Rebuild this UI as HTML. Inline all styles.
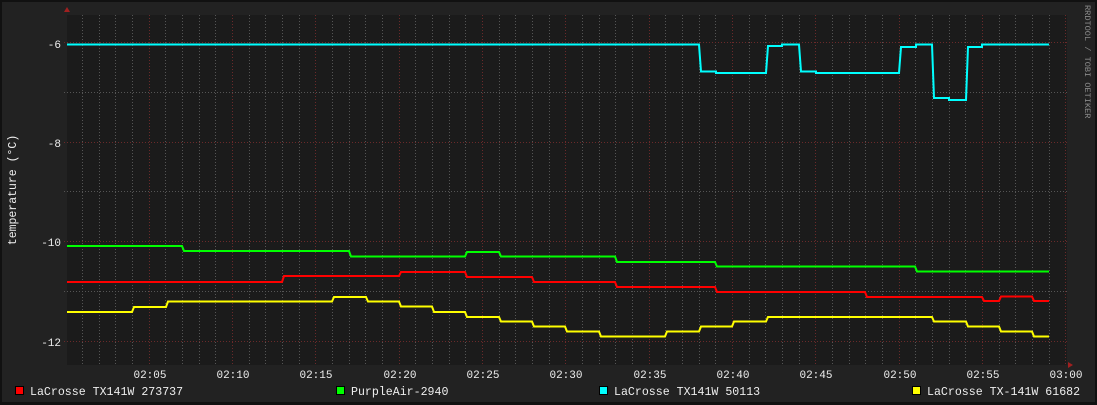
<!DOCTYPE html>
<html><head><meta charset="utf-8"><style>
html,body{margin:0;padding:0;background:#111;}
svg{display:block;}
text{font-family:"Liberation Mono","DejaVu Sans Mono",monospace;}
</style></head><body>
<svg width="1097" height="405" viewBox="0 0 1097 405" xmlns="http://www.w3.org/2000/svg">
<rect x="0" y="0" width="1097" height="405" fill="#111"/>
<rect x="2" y="2" width="1093" height="400" fill="#222"/>
<rect x="67" y="15" width="1000" height="350" fill="#1b1b1b"/>
<g stroke="#555" stroke-width="1" stroke-dasharray="1,2" shape-rendering="crispEdges">
<path d="M82.5 15V365M99.5 15V365M115.5 15V365M132.5 15V365M165.5 15V365M182.5 15V365M199.5 15V365M215.5 15V365M249.5 15V365M265.5 15V365M282.5 15V365M299.5 15V365M332.5 15V365M349.5 15V365M365.5 15V365M382.5 15V365M415.5 15V365M432.5 15V365M449.5 15V365M465.5 15V365M499.5 15V365M515.5 15V365M532.5 15V365M549.5 15V365M582.5 15V365M599.5 15V365M615.5 15V365M632.5 15V365M665.5 15V365M682.5 15V365M699.5 15V365M715.5 15V365M749.5 15V365M765.5 15V365M782.5 15V365M799.5 15V365M832.5 15V365M849.5 15V365M865.5 15V365M882.5 15V365M915.5 15V365M932.5 15V365M949.5 15V365M965.5 15V365M999.5 15V365M1015.5 15V365M1032.5 15V365M1049.5 15V365"/>
<path d="M64 92.5H1067M64 191.5H1067M64 291.5H1067"/>
</g>
<g stroke="#6a2a2a" stroke-width="1" stroke-dasharray="1,2" shape-rendering="crispEdges">
<path d="M149.5 15V365M232.5 15V365M315.5 15V365M399.5 15V365M482.5 15V365M565.5 15V365M649.5 15V365M732.5 15V365M815.5 15V365M899.5 15V365M982.5 15V365M1065.5 15V365"/>
<path d="M64 42.5H1067M64 142.5H1067M64 241.5H1067M64 341.5H1067"/>
</g>
<polygon points="64,12 70,12 67,7" fill="#a02020"/>
<polygon points="1068,362 1068,368 1073,365" fill="#a02020"/>
<g fill="none" stroke-width="2">
<path stroke="#ff0000" d="M67 282H282L284 276H399L401 272H465L467 277H532L534 282H615L617 287H715L717 292H865L867 297H982L984 301H999L1001 296.5H1032L1034 301H1049"/>
<path stroke="#00ff00" d="M67 246H182L184 251H349L351 256.5H465L467 252H499L501 256.5H615L617 262H715L717 266.5H915L917 271.5H1049"/>
<path stroke="#ffff00" d="M67 312H132L134 307H166L168 301.5H332L334 297H366L368 301.5H399L401 306.5H432L434 312H465L467 317H499L501 321.5H532L534 326.5H565L567 331.5H599L601 336.5H665L667 331.5H699L701 326.5H732L734 321.5H766L768 317H932L934 321.5H966L968 326.5H999L1001 331.5H1032L1034 336.5H1049"/>
<path stroke="#00ffff" d="M67 44.5H699L701 71.5H716V73H766L768 46H782V44.5H799L801 71.5H816V73H899L901 47H916V44.5H932L934 98H949V100H966L968 47H982V44.5H1049"/>
</g>
<g fill="#eee" font-size="11" text-anchor="end">
<text x="61" y="48">-6</text>
<text x="61" y="147">-8</text>
<text x="61" y="246">-10</text>
<text x="61" y="346">-12</text>
</g>
<g fill="#eee" font-size="11" text-anchor="middle">
<text x="150" y="378">02:05</text><text x="233" y="378">02:10</text><text x="316" y="378">02:15</text><text x="400" y="378">02:20</text><text x="483" y="378">02:25</text><text x="566" y="378">02:30</text><text x="650" y="378">02:35</text><text x="733" y="378">02:40</text><text x="816" y="378">02:45</text><text x="900" y="378">02:50</text><text x="983" y="378">02:55</text><text x="1066" y="378">03:00</text>
</g>
<text transform="translate(16,190) rotate(-90)" fill="#eee" font-size="11.5" text-anchor="middle">temperature (°C)</text>
<text transform="translate(1085,5) rotate(90)" fill="#888" font-size="8.6">RRDTOOL / TOBI OETIKER</text>
<g font-size="11.6" fill="#eee">
<rect x="15.5" y="386.5" width="8" height="8" fill="#ff0000" stroke="#000"/><text x="30" y="395">LaCrosse TX141W 273737</text>
<rect x="336.5" y="386.5" width="8" height="8" fill="#00ff00" stroke="#000"/><text x="351" y="395">PurpleAir-2940</text>
<rect x="599.5" y="386.5" width="8" height="8" fill="#00ffff" stroke="#000"/><text x="614" y="395">LaCrosse TX141W 50113</text>
<rect x="912.5" y="386.5" width="8" height="8" fill="#ffff00" stroke="#000"/><text x="927" y="395">LaCrosse TX-141W 61682</text>
</g>
</svg>
</body></html>
